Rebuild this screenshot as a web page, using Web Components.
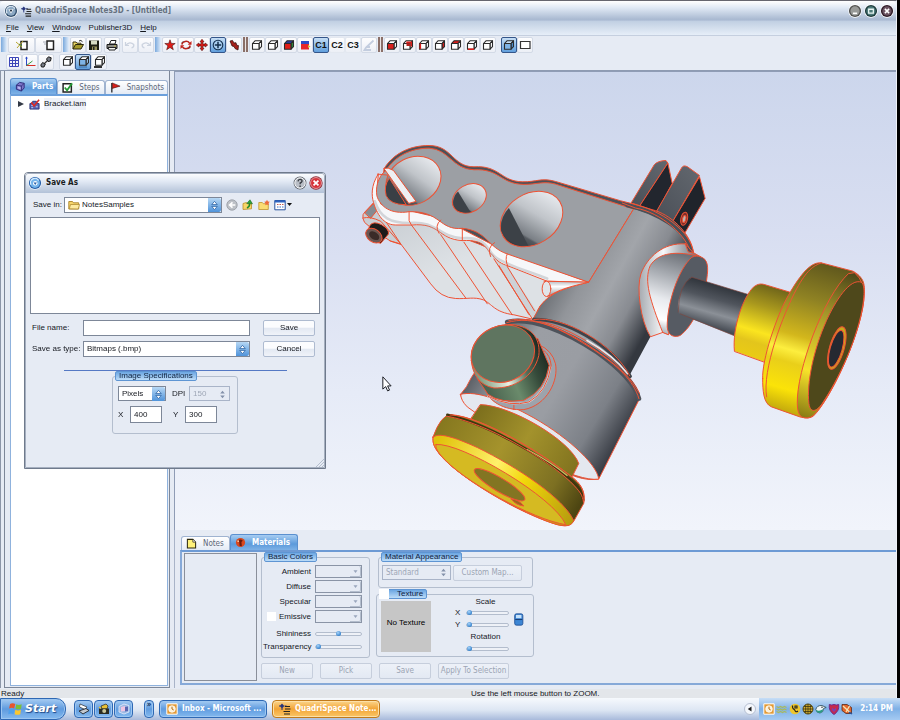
<!DOCTYPE html>
<html lang="en">
<head>
<meta charset="utf-8">
<title>QuadriSpace Notes3D - [Untitled]</title>
<style>
  html, body { margin: 0; height: 100%; overflow: hidden; }
  body {
    --ui: "Liberation Sans", sans-serif;
    --caption: "DejaVu Sans Condensed", "DejaVu Sans", sans-serif;
    --face: #e6ebf4;
    --edge: #a9b4c8;
    --steel: #7d8798;
    font: 8px/12px var(--ui);
    color: #15181f;
    background: #000;
  }
</style>
</head>
<body>
<notes-app></notes-app>
<script>
const BASE = `
  *, *::before, *::after { box-sizing: border-box; }
  :host { display: block; box-sizing: border-box; }
  :host([hidden]) { display: none; }
  button, input, select { font: inherit; color: inherit; margin: 0; padding: 0; border: 0; border-radius: 0; outline: 0; appearance: none; background: none; min-width: 0; }
  label { white-space: nowrap; }
  svg { display: block; }
`;
function define(name, css, html, setup) {
  const tpl = document.createElement('template');
  tpl.innerHTML = `<style>${BASE}${css}</style>`;
  customElements.define(name, class extends HTMLElement {
    constructor() {
      super();
      const root = this.attachShadow({ mode: 'open' });
      root.append(tpl.content.cloneNode(true));
    }
    connectedCallback() {
      if (this.ready) return;
      this.ready = true;
      const body = document.createElement('template');
      body.innerHTML = typeof html === 'function' ? html(this) : html;
      this.shadowRoot.append(body.content.cloneNode(true));
      if (setup) setup(this, this.shadowRoot);
    }
  });
}

/* ---------- icons, each on a 12 x 12 grid ---------- */
const cube = (front = '#fff', top = '#fff', side = '#fff', extra = '') =>
  `<g stroke="#2b2b2b" stroke-width="1.1" stroke-linejoin="round"><path fill="${top}" d="M1.500 4.500l2.500-2.700h6.500l-2.500 2.700z"/><path fill="${side}" d="M8 4.500l2.500-2.700v5.900L8 10.200z"/><path fill="${front}" d="M1.500 4.500H8v5.700H1.500z"/></g>${extra}`;
const ICONS = {
  orb: `<circle cx="6" cy="6" r="5.700" fill="#fff"/><circle cx="6" cy="6" r="5.200" fill="#34506f"/><circle cx="6" cy="6" r="4" fill="#8da9c4"/><path d="M2.600 8a3.900 3.900 0 0 1 6.800-4" fill="none" stroke="#dbe8f3" stroke-width="1"/><path d="M3.800 4.500h4.400L6 8.200z" fill="#fff"/><path d="M4.800 5h2.400L6 7z" fill="#16283c"/>`,
  orbBlue: `<circle cx="6" cy="6" r="5.700" fill="#e8f1fb"/><circle cx="6" cy="6" r="5.200" fill="#245da8"/><circle cx="6" cy="6" r="4.200" fill="#73b3ea"/><path d="M2.600 7.500a3.700 3.700 0 0 1 6.500-3.600" fill="none" stroke="#d7edff" stroke-width="1.100"/><circle cx="6.200" cy="6.200" r="1.900" fill="#fff"/><path d="M4.800 5.500h2.800L6.200 7.800z" fill="#245da8"/>`,
  app: `<path d="M3 .5L5.300 3 3 5.500.7 3z" fill="#27357c"/><path d="M5.500 3h2M1 3H0M3 5v2" stroke="#27357c"/><path d="M6 3.500h5M6 6h5.500M4.500 8.500H11M5 11h6" stroke="#222" stroke-width="1.200"/>`,
  newView: `<path d="M5 2.500h6v8H5z" fill="#fff" stroke="#222" stroke-width="1.500"/><path d="M0 3l6 5M1 9l6-7" stroke="#b9a52c" stroke-width="1"/><path d="M3 5l3 2" stroke="#4b8a37"/>`,
  copyView: `<path d="M4 2h6.500v8.500H4z" fill="#fff" stroke="#222" stroke-width="1.500"/><path d="M0 3h3M1 5h2" stroke="#a7adb8"/>`,
  open: `<path d="M1 10V3h3l1 1.200h4V6" fill="#e9d564" stroke="#3a3510" stroke-width="1"/><path d="M1 10l2.500-4.500h8L9 10z" fill="#a59a2c" stroke="#2a270d" stroke-width="1"/><path d="M7 2q2-1.500 3.500.8" fill="none" stroke="#222"/>`,
  save: `<path d="M1 1.500h10v9.500H1z" fill="#1c1d12"/><path d="M3 1.500h6v4H3z" fill="#d7dcc4"/><path d="M4 7.500h5v3.500H4z" fill="#97935a"/><path d="M5 8h1.500v3H5z" fill="#222"/>`,
  print: `<path d="M3.500 5L5 1.500h5L9 5z" fill="#fff" stroke="#222"/><path d="M1 5.500h10v4H1z" fill="#8b8b86" stroke="#1b1b1b"/><path d="M2 8.500h8l-1 2.500H3z" fill="#f3f3ef" stroke="#222"/><circle cx="9" cy="7" r=".7" fill="#d8c334"/>`,
  undo: `<path d="M1.500 3v3.500H5M1.800 6.300q4-4.500 8-.8.500 2.500-2.300 3.500" fill="none" stroke="#ccd3df" stroke-width="1.200"/>`,
  redo: `<path d="M10.500 3v3.500H7M10.200 6.300q-4-4.500-8-.8-.5 2.500 2.300 3.500" fill="none" stroke="#ccd3df" stroke-width="1.200"/>`,
  star: `<path d="M6 .8l1.300 3.600 3.900.1-3.100 2.300 1.200 3.900L6 8.500l-3.300 2.200 1.200-3.900L.8 4.500l3.900-.1z" fill="#e01d18" stroke="#4a0c0a" stroke-width=".6"/>`,
  rotate: `<path d="M1.800 5.500C2.500 2 7.500 1.300 9.500 4M10.200 6.500C9.500 10 4.500 10.700 2.500 8" fill="none" stroke="#b9241e" stroke-width="1.500"/><path d="M11.500 2v3.800H7.700zM.5 10V6.200h3.800z" fill="#c3211b"/><path d="M2 3.500l1-1M9 9.500l1-1" stroke="#222"/>`,
  move: `<path d="M6 .3l2 2.500H6.900v2.300h2.300V4l2.500 2-2.500 2V6.900H6.900v2.300H8L6 11.700 4 9.200h1.100V6.900H2.800V8L.3 6l2.500-2v1.100h2.300V2.800H4z" fill="#e01d18" stroke="#4a0c0a" stroke-width=".6"/>`,
  zoom: `<circle cx="6" cy="6" r="4.800" fill="#a9cdef" stroke="#14304f" stroke-width="1.100"/><path d="M6 2.800v6.400M2.800 6h6.400" stroke="#14304f" stroke-width="1.500"/>`,
  brush: `<path d="M2 2l2.500-.6L6 4l2-.3.700 2.500 1.800.4L10 11 7 9.500 6 7.500 4 7 3 4.500z" fill="#a3201b" stroke="#2d0a08" stroke-width=".7"/>`,
  cube: cube(), cubeRGB: cube('#e01d18', '#263b9c', '#2f8f3a'),
  split: `<path d="M2 2h8v3H2z" fill="#2c4ac4"/><path d="M2 5h8v5.500H2z" fill="#e5252a"/><path d="M9 6l2.500 1.500L9 9z" fill="#d8c334"/>`,
  pen: `<path d="M10.500 1.500L3 8.500 1.500 11H8M7 8H3" stroke="#c3cddf" stroke-width="1.800" fill="none"/>`,
  cubeFront: cube('#d81f1b'), cubeBack: cube('#fff', '#fff', '#fff', '<path d="M4.300 2.500h5.700v5H8.500V4.500H4.300z" fill="#d81f1b"/><path d="M4.500 4.500H8V7H4.500z" fill="#b5201c"/>'),
  cubeLeft: cube('#fff', '#fff', '#fff', '<path d="M2.300 4.500v5.500" stroke="#d81f1b" stroke-width="1.600"/>'),
  cubeRight: cube('#fff', '#fff', '#d81f1b'), cubeTop: cube('#fff', '#d81f1b'),
  cubeBottom: cube('#fff', '#fff', '#fff', '<path d="M2 10.200h6" stroke="#d81f1b" stroke-width="1.600"/>'),
  cubeBlue: cube('#7fb4e6', '#c7e0f7', '#4f8fcf'),
  rect: `<path d="M1.500 2.500h9.500v7H1.500z" fill="#fff" stroke="#333" stroke-width="1.200"/>`,
  grid: `<path d="M1.500 1.500h9v9h-9zM4.500 1v10M7.500 1v10M1 4.500h10M1 7.500h10" fill="none" stroke="#3c46b8" stroke-width="1"/>`,
  axes: `<path d="M2.500 10V1" stroke="#2c4ac4"/><path d="M2.500 9.500h9" stroke="#d82d24"/><path d="M2.500 9.500L8.500 5" stroke="#3b9a43"/><path d="M1 2.500L2.500.5 4 2.500z" fill="#2c4ac4"/>`,
  link: `<path d="M3 9L9 3" stroke="#333" stroke-width="1.200"/><path d="M.8 9l1.800-2.500L5.300 8 4 11H1.500zM6.500 3L8.500.8l2.700 1L10.500 5 8 5.500z" fill="#777c86" stroke="#1b1b1b"/>`,
  cubeShadow: `<g transform="translate(1 -1)">${cube()}</g>`,
  cubeGlow: `<g transform="translate(1 -1)">${cube('#7fb4e6', '#fff', '#9cc6ee')}</g><path d="M2 11h8" stroke="#3a6ea5" stroke-width="1"/>`,
  cubeFloor: `<g transform="translate(1 -1)">${cube()}</g><path d="M1 11h8" stroke="#1b1b1b" stroke-width="1.800"/>`,
  parts: `<path d="M1.500 4.500L5 1.500l5 1v5L7 11l-5.500-2z" fill="#7c74c9" stroke="#2d2a77"/><path d="M1.500 4.500L7 5.500l3-3M7 5.500V11" fill="none" stroke="#2d2a77" stroke-width=".9"/><path d="M3 6l3 .5v2.700L3 8.300z" fill="#b9b5ee"/>`,
  steps: `<path d="M1.200 2h9v9h-9z" fill="#fff" stroke="#222" stroke-width="1.600"/><path d="M3 6l2.500 3L11 1.500" fill="none" stroke="#249a34" stroke-width="1.900"/>`,
  flag: `<path d="M2 1v10.500" stroke="#222" stroke-width="1.400"/><path d="M2.500 1l8.500 3.500L2.500 7z" fill="#d8201b" stroke="#3b0a08" stroke-width=".6"/>`,
  bracket: `<path d="M1 5h3V2.500h4V5h3v6H1z" fill="#5c66b5" stroke="#2a3276"/><path d="M2.500 7h2M7.500 8.500h2M2.500 9.500h2" stroke="#cfd5f5"/><path d="M2.500 3.500L5.500 7.500 11 .8" fill="none" stroke="#dc2822" stroke-width="1.700"/>`,
  note: `<path d="M1.500 1.500h6l3 3v6.500h-9z" fill="#fff27a" stroke="#2a270d" stroke-width="1.100"/><path d="M7.500 1.500v3h3" fill="#fff" stroke="#2a270d" stroke-width=".8"/>`,
  material: `<circle cx="6" cy="6" r="5" fill="#d9481d"/><path d="M3.500 3.500q3-1.500 5 .5L7 5.500 7.500 10l-2.500-.5-.3-4z" fill="#6a1a0c"/><circle cx="3.500" cy="4.500" r="1" fill="#ffc79a"/>`,
  back: `<circle cx="6" cy="6" r="5.200" fill="#bdc1c7" stroke="#93989f" stroke-width=".8"/><path d="M9.300 6h-5M6.500 3.300L3.600 6l2.900 2.700" fill="none" stroke="#fff" stroke-width="1.600"/>`,
  up: `<path d="M1 10.500V4.500l3.500-1 1 1.300 4-1v6z" fill="#f8d568" stroke="#b98d27" stroke-width=".8"/><path d="M5 9q3-1.500 2.500-4.500" fill="none" stroke="#1f8b2b" stroke-width="1.600"/><path d="M4.700 4.500L8 .8l2.500 4z" fill="#2ba43a" stroke="#14631e" stroke-width=".5"/>`,
  newFolder: `<path d="M.8 10.500V3.500h3.500l1 1.200h5v5.800z" fill="#fbdc72" stroke="#c0942c" stroke-width=".8"/><path d="M9 .8l.9 1.700 1.900.3-1.300 1.500.2 2L9 5.500l-1.700.8.2-2L6.200 2.800l1.900-.3z" fill="#ef6a3a"/>`,
  folder: `<path d="M.8 10V2.500h3.700l1 1.300h5.200V10z" fill="#f7d56a" stroke="#a8822a" stroke-width=".9"/><path d="M1.300 9.800L2.500 5.500h9L10.300 10z" fill="#fdeaa0" stroke="#a8822a" stroke-width=".7"/>`,
  views: `<path d="M.8 1.500h10.400v9.300H.8z" fill="#fff" stroke="#27529e"/><path d="M.8 2.500h10.400" stroke="#2c62c0" stroke-width="2"/><path d="M3 5.500h1.500M5.500 5.500H7M8 5.500h1.500" stroke="#c45a50"/><path d="M3 8h1.500M5.500 8H7M8 8h1.500" stroke="#3d73c9"/>`,
  windows: `<g transform="skewX(-8) translate(1 0)"><path d="M1 1.800q2-1.300 4.500 0L5 5.500q-2-1-4.300 0z" fill="#e9552c"/><path d="M6.300 2q2.300 1 4.700 0v3.800q-2.300 1-4.700 0z" fill="#7dbf38"/><path d="M.7 6.500q2.300-1 4.500 0v3.900q-2.200-1-4.500 0z" fill="#4ea0ec"/><path d="M6.200 6.700q2.400 1 4.800 0v3.800q-2.400 1-4.800 0z" fill="#fbc72f"/></g>`,
  scanner: `<path d="M2 1l7 3-2 2.500L1.500 4z" fill="#fff" stroke="#3a4048" stroke-width=".8"/><path d="M1 8l7-2.500L11 7.500 5 11z" fill="#c3c9d0" stroke="#20252b" stroke-width=".9"/>`,
  camera: `<path d="M3 3l5-2 2 2-1 3H4z" fill="#e6be35" stroke="#222" stroke-width=".7"/><path d="M1 5.500h10v5.500H1z" fill="#292b22"/><circle cx="6.200" cy="8" r="2" fill="#c8c69c"/><path d="M1 4l2 1.500" stroke="#e6be35" stroke-width="1.500"/>`,
  mediaCard: `<path d="M1 3.500L6 1l5 1.500V9l-5 2-5-2z" fill="#9cb9e4" stroke="#e9eefb" stroke-width=".8"/><path d="M3 4l4-1v5L3 8.500z" fill="#f0c5e2"/><path d="M7 4l3-.5V8l-3 .5z" fill="#5a66b0"/>`,
  clock: `<path d="M.8.8h10.400v10.400H.8z" fill="#e39a35" stroke="#fff" stroke-width="1"/><circle cx="6" cy="6" r="3.300" fill="#fdf0d6" stroke="#fff" stroke-width=".7"/><path d="M6 3.700V6l1.700 1" stroke="#b36a12" stroke-width="1" fill="none"/>`,
  wave: `<path d="M.5 3.500l2 1 2-1 2 1 2-1 2 1M.5 6l2 1 2-1 2 1 2-1 2 1M.5 8.500l2 1 2-1 2 1 2-1 2 1" fill="none" stroke="#a9b95c" stroke-width="1.200"/>`,
  phone: `<circle cx="6" cy="6" r="5.300" fill="#efc62c"/><path d="M3.500 2.500q-.5 3 2 4M5.500 6.500q1 3.500 3.500 1.500M6 3h2v2h-2z" fill="none" stroke="#222" stroke-width="1.100"/>`,
  globe: `<circle cx="6" cy="6" r="5.200" fill="#dcb431"/><path d="M6 1v10M1 6h10M2 3.500h8M2 8.500h8M3.700 2v8M8.300 2v8" stroke="#2a270d" stroke-width=".7"/><circle cx="6" cy="6" r="5" fill="none" stroke="#2a270d" stroke-width=".8"/>`,
  bird: `<path d="M.8 6.500Q2 2 7 2.500l4.200 2-2.500.8Q8.500 9.500 5 10 1.500 10 .8 6.500z" fill="#eef5f7" stroke="#2b4a57" stroke-width=".8"/><path d="M1 6.800Q4 9 8 6.300 8 9.500 5 10 1.500 10 1 6.800z" fill="#2a9c85"/><circle cx="7" cy="4.300" r=".7" fill="#222"/>`,
  shield: `<path d="M1.300 1.500q2.300 1 4.700 0 2.400 1 4.700 0Q11.500 8 6 11.500.5 8 1.300 1.500z" fill="#c62a4c" stroke="#712a89" stroke-width="1"/><path d="M4 4.500l2 2 2-2V7L6 9 4 7z" fill="#7a3fb0"/>`,
  tools: `<path d="M1 1.500h5l4.500 3v6H5L1 7.500z" fill="#e4672c" stroke="#5c2a18" stroke-width=".8"/><path d="M2 3l7 6.500M8.500 3L5 9" stroke="#f5e4b4" stroke-width="1.300"/><path d="M8 9l3 2" stroke="#27529e" stroke-width="1.500"/>`,
  linked: `<rect x="2.500" y=".8" width="7.500" height="10.400" rx="1.500" fill="#3d86d4" stroke="#1f4f94" stroke-width=".8"/><path d="M3.700 1.800h5v3h-5z" fill="#c5e2fb"/><path d="M3 6h6.500" stroke="#163d77" stroke-width="1"/>`,
  spin: `<path d="M6 1.500L9 5H3zM6 10.500L9 7H3z" fill="#fff" stroke="#225a9e" stroke-width=".8"/>`,
  spinGray: `<path d="M6 2L8.500 5h-5zM6 10L8.500 7h-5z" fill="#8391aa"/>`,
  down: `<path d="M3.300 4.300h5.400L6 8z" fill="#9aa6bd"/>`,
  help: `<circle cx="6" cy="6" r="5.500" fill="#5b6068"/><circle cx="6" cy="6" r="4.500" fill="#b9bec6" stroke="#fff" stroke-width=".8"/><path d="M4.300 4.600q.2-1.800 1.900-1.700 1.700.2 1.500 1.600-.2.900-1.500 1.500v1M6.100 8.200v1.200" fill="none" stroke="#3c4046" stroke-width="1.200"/>`,
  closeRed: `<circle cx="6" cy="6" r="5.700" fill="#8e2530"/><circle cx="6" cy="6" r="4.700" fill="#d6343b" stroke="#f7c6c8" stroke-width=".6"/><path d="M3.900 3.900l4.200 4.200M8.100 3.900L3.900 8.100" stroke="#fff" stroke-width="1.500"/>`,
  min: `<circle cx="6" cy="6" r="5.700" fill="#fff"/><circle cx="6" cy="6" r="5.200" fill="#4f504f"/><circle cx="6" cy="6" r="4" fill="#989a98"/><path d="M4.200 8h3.600" stroke="#fff" stroke-width="1.400"/>`,
  max: `<circle cx="6" cy="6" r="5.700" fill="#fff"/><circle cx="6" cy="6" r="5.200" fill="#1d3a3c"/><circle cx="6" cy="6" r="4" fill="#4d7a78"/><path d="M4 4.500h4v3.300H4z" fill="none" stroke="#e8f4f2" stroke-width="1.100"/>`,
  close: `<circle cx="6" cy="6" r="5.700" fill="#fff"/><circle cx="6" cy="6" r="5.200" fill="#2d1a26"/><circle cx="6" cy="6" r="4" fill="#6b5361"/><path d="M4.200 4.200l3.600 3.600M7.800 4.200L4.200 7.800" stroke="#fff" stroke-width="1.300"/>`,
  collapse: `<circle cx="6" cy="6" r="5.500" fill="#f4f7fc" stroke="#a9b4c8" stroke-width=".8"/><path d="M7.500 3.500v5L3.800 6z" fill="#1b1b1b"/>`
};
define('ui-icon', `:host { display: inline-block; flex: none; width: var(--size, 12px); height: var(--size, 12px); } svg { width: 100%; height: 100%; }`,
  el => `<svg viewBox="0 0 12 12" aria-hidden="true">${ICONS[el.getAttribute('name')] || ''}</svg>`);

/* ---------- small controls ---------- */
define('tool-button', `
  :host { flex: none; }
  button { display: flex; align-items: center; justify-content: center; width: 16px; height: 16px; border: 1px solid #d3dae6; border-radius: 2px; background: linear-gradient(#fdfdfe, #eceff6); font: bold 9px/12px "Liberation Sans", sans-serif; color: #101114; }
  :host([wide]) button { width: 27px; }
  :host([active]) button { background: linear-gradient(#c6def5, #5f9edc); border-color: #34568a; }
  ui-icon { --size: 12px; }
  :host([text]) button { border-color: #e3e8f0; }
  :host([text][active]) button { border-color: #34568a; }
`, el => {
  const t = el.getAttribute('text'), pressed = el.hasAttribute('active');
  return `<button type="button" aria-pressed="${pressed}" aria-label="${el.getAttribute('label') || t}">${t || `<ui-icon name="${el.getAttribute('icon')}"></ui-icon>`}</button>`;
});
define('tool-grip', `
  :host { flex: none; width: 6px; height: 15px; margin: 0 1px; background: linear-gradient(90deg, #7aa9dd, #e4eefa); }
  :host([brown]) { width: 5px; background: linear-gradient(90deg, #8a6f68 40%, #e9e4e4 40% 60%, #8a6f68 60%); }
`, '');

define('push-button', `
  button { width: 100%; height: 16px; border: 1px solid #aebbd0; border-radius: 2px; background: linear-gradient(#fbfcfe 45%, #e2e8f2 50%, #f0f3f9); text-align: center; white-space: nowrap; }
  button:disabled { border-color: #c6cedc; background: linear-gradient(#edf1f8, #e3e9f3); color: #9ba4b4; font: 8px/12px var(--caption); }
`, el => `<button type="button" ${el.hasAttribute('disabled') ? 'disabled' : ''}>${el.getAttribute('label')}</button>`);

const SELECT_CSS = `
  .pick { display: grid; grid-template-columns: 1fr 13px; border: 1px solid var(--steel); background: #fff; height: 16px; }
  .pick select { grid-area: 1 / 1 / 2 / 3; width: 100%; height: 100%; padding: 0 14px 0 3px; line-height: 14px; }
  .pick .knob { grid-area: 1 / 2; display: flex; align-items: center; justify-content: center; pointer-events: none; background: linear-gradient(#b7d8f5, #4f93da); border-radius: 0 2px 2px 0; }
  .pick .knob ui-icon { --size: 11px; }
  .pick.off { background: var(--face); border-color: #a9b4c8; color: #808a9c; }
  .pick.off .knob { background: none; }
`;
define('group-box', `
  fieldset { margin: 0; padding: 0; border: 1px solid #b4bece; border-radius: 3px; min-width: 0; height: 100%; }
  legend { display: flex; align-items: center; margin-left: 2px; padding: 0 3px; height: 10px; line-height: 10px; white-space: nowrap; color: #10233f; border-radius: 2px; border: 1px solid #5e95d3; background: linear-gradient(#6ba6e2, #bcdcf8); }
  legend label { display: flex; align-items: center; gap: 8px; margin-left: -4px; }
  legend input { width: 10px; height: 10px; background: #fff; }
`, el => {
  const t = el.getAttribute('title-text');
  return `<fieldset><legend>${el.hasAttribute('check') ? `<label><input type="checkbox">${t}</label>` : t}</legend><slot></slot></fieldset>`;
});
const SLIDER_CSS = `
  input[type=range] { display: block; width: 100%; height: 6px; cursor: default; }
  input[type=range]::-webkit-slider-runnable-track { height: 4px; border: 1px solid #b3bdcd; border-radius: 2px; background: #eef1f7; }
  input[type=range]::-webkit-slider-thumb { appearance: none; width: 5px; height: 5px; margin-top: -2px; border-radius: 50%; background: radial-gradient(circle at 40% 35%, #a9d5fa, #2f7ecb 75%); }
`;
const TAB_CSS = `
  [role=tablist] { display: flex; align-items: flex-end; }
  [role=tab] { display: flex; align-items: center; gap: 6px; height: 14px; padding: 0 4px; border: 1px solid #9fb3d0; border-bottom: 0; border-radius: 3px 3px 0 0; background: linear-gradient(#fff, #e4ebf5); font: 8px/12px var(--caption); color: #5d6878; }
  [role=tab][aria-selected=true] { height: 16px; background: linear-gradient(#a7cdf2, #5c9adb 60%, #7db1e6); border-color: #5b90cf; color: #fff; font-weight: bold; }
  [role=tab] ui-icon { --size: 11px; }
`;

/* ---------- window chrome ---------- */
define('app-titlebar', `
  :host { display: flex; align-items: center; height: 20px; padding: 0 2px 0 4px; gap: 3px; border-radius: 4px 4px 0 0; background: linear-gradient(#fff, #dfe8f4 35%, #a9b9d1 92%, #b7c6dc); }
  h1 { flex: 1; margin: 0; font: bold 8px/12px var(--caption); color: #667180; white-space: nowrap; }
  .lead { --size: 14px; } .mark { --size: 11px; }
  nav { display: flex; gap: 2px; } button { display: flex; } nav ui-icon { --size: 14px; }
`, `<ui-icon class="lead" name="orb"></ui-icon><ui-icon class="mark" name="app"></ui-icon><h1>QuadriSpace Notes3D - [Untitled]</h1>
<nav aria-label="Window"><button type="button" aria-label="Minimize"><ui-icon name="min"></ui-icon></button><button type="button" aria-label="Restore"><ui-icon name="max"></ui-icon></button><button type="button" aria-label="Close"><ui-icon name="close"></ui-icon></button></nav>`);
define('app-menubar', `
  :host { display: flex; gap: 8px; height: 15px; padding: 1px 6px; background: linear-gradient(#c0cfe2, #e6eef8); border-bottom: 1px solid #c5cfdf; }
  button { line-height: 12px; }
`, `<button type="button"><u>F</u>ile</button><button type="button"><u>V</u>iew</button><button type="button"><u>W</u>indow</button><button type="button">Publisher3D</button><button type="button"><u>H</u>elp</button>`);
const tb = (icon, label, a = '') => `<tool-button icon="${icon}" label="${label}" ${a}></tool-button>`;
define('app-toolbars', `
  :host { background: var(--face); border-bottom: 1px solid #8e9bb2; height: 35px; }
  div { display: flex; align-items: center; height: 17px; }
  div + div { padding-left: 6px; }
  .gap { margin-left: 2px; }
  .wide-gap { margin-left: 5px; }
`, `<div role="toolbar" aria-label="Main"><tool-grip></tool-grip>${tb('newView', 'New view', 'wide')}${tb('copyView', 'Copy view', 'wide')}
<tool-grip></tool-grip>${tb('open', 'Open')}${tb('save', 'Save')}${tb('print', 'Print', 'class="gap"')}${tb('undo', 'Undo', 'class="gap"')}${tb('redo', 'Redo')}
<tool-grip></tool-grip>${tb('star', 'Reset')}${tb('rotate', 'Rotate')}${tb('move', 'Pan')}${tb('zoom', 'Zoom', 'active')}${tb('brush', 'Fly')}
<tool-grip brown></tool-grip>${tb('cube', 'Wireframe')}${tb('cube', 'Hidden line')}${tb('cubeRGB', 'Shaded')}${tb('split', 'Split')}
<tool-button text="C1" active></tool-button><tool-button text="C2"></tool-button><tool-button text="C3"></tool-button>${tb('pen', 'Pen')}
<tool-grip brown></tool-grip>${tb('cubeFront', 'Front')}${tb('cubeBack', 'Back')}${tb('cubeLeft', 'Left')}${tb('cubeRight', 'Right')}${tb('cubeTop', 'Top')}${tb('cubeBottom', 'Bottom')}${tb('cube', 'Isometric')}${tb('cubeBlue', 'Perspective', 'active class="wide-gap"')}${tb('rect', 'Orthographic')}</div>
<div role="toolbar" aria-label="Display">${tb('grid', 'Grid')}${tb('axes', 'Axes')}${tb('link', 'Links')}${tb('cubeShadow', 'No shadow', 'class="wide-gap"')}${tb('cubeGlow', 'Glow', 'active')}${tb('cubeFloor', 'Floor')}</div>`);

/* ---------- parts tree ---------- */
define('parts-panel', TAB_CSS + `
  :host { display: flex; flex-direction: column; padding: 7px 1px 1px 5px; border: 1px solid var(--steel); border-top: 0; background: var(--face); min-height: 0; }
  .tree { flex: 1; background: #fff; border: 1px solid #8fb2dd; border-top: 2px solid #6b9fdb; padding: 2px 6px; margin: 0; list-style: none; }
  li { display: flex; align-items: center; gap: 4px; }
  li ui-icon { --size: 11px; }
  li span { background: #eef1f8; }
  [role=tab] { flex: 1 1 46px; } [role=tab]:last-child { flex-basis: 62px; }
`, `<div role="tablist"><button role="tab" aria-selected="true"><ui-icon name="parts"></ui-icon>Parts</button><button role="tab" aria-selected="false"><ui-icon name="steps"></ui-icon>Steps</button><button role="tab" aria-selected="false"><ui-icon name="flag"></ui-icon>Snapshots</button></div>
<ul class="tree" role="tree"><li role="treeitem"><svg width="8" height="8" viewBox="0 0 8 8" aria-hidden="true"><path d="M1 1l6 3-6 3z" fill="#333a46"/></svg><ui-icon name="bracket"></ui-icon><span>Bracket.iam</span></li></ul>`);

/* ---------- 3D model ---------- */
define('model-view', `
  :host { min-height: 0; border-top: 1px solid #8f9cb5; border-left: 1px solid #8f9cb5; background: linear-gradient(#ccd6ec, #d8def1 35%, #e6ebf7 70%, #f1f4fb); overflow: hidden; }
  svg { width: 100%; height: 100%; }
`, `<svg viewBox="174 71 722 459" role="img" aria-label="Bracket assembly">
<defs>
  <linearGradient id="neck" gradientUnits="userSpaceOnUse" x1="610" y1="500" x2="890" y2="655"><stop offset="0" stop-color="#6d7176"/><stop offset=".25" stop-color="#92959a"/><stop offset=".5" stop-color="#a2a5aa"/><stop offset=".75" stop-color="#888b91"/><stop offset="1" stop-color="#34383f"/></linearGradient>
  <linearGradient id="drum" gradientUnits="userSpaceOnUse" x1="250" y1="200" x2="665" y2="450"><stop offset="0" stop-color="#5d6167"/><stop offset=".2" stop-color="#9b9ea4"/><stop offset=".5" stop-color="#9a9da3"/><stop offset=".8" stop-color="#7c8087"/><stop offset="1" stop-color="#363a42"/></linearGradient>
  <linearGradient id="bore" x1="0" y1=".7" x2="1" y2=".3"><stop offset="0" stop-color="#2e3238"/><stop offset=".22" stop-color="#555a60"/><stop offset=".25" stop-color="#7a7f85"/><stop offset=".6" stop-color="#c0c4c9"/><stop offset="1" stop-color="#e9ecf0"/></linearGradient>
  <linearGradient id="side" x1="0" y1="0" x2="1" y2="1"><stop offset="0" stop-color="#c9ced3"/><stop offset=".4" stop-color="#dde1e5"/><stop offset="1" stop-color="#dde1e5"/></linearGradient>
  <linearGradient id="horn" x1="0" y1="0" x2="0" y2="1"><stop offset="0" stop-color="#b6bac0"/><stop offset=".35" stop-color="#fff"/><stop offset="1" stop-color="#8f949a"/></linearGradient>
  <linearGradient id="boss" x1=".6" y1="0" x2=".4" y2="1"><stop offset="0" stop-color="#6d7178"/><stop offset=".3" stop-color="#a9adb3"/><stop offset=".6" stop-color="#e8eaee"/><stop offset=".85" stop-color="#fff"/><stop offset="1" stop-color="#aeb3ba"/></linearGradient>
  <linearGradient id="bossL" x1="0" y1="0" x2="1" y2="0"><stop offset="0" stop-color="#a6aab0"/><stop offset=".4" stop-color="#f7f8fa"/><stop offset=".7" stop-color="#a7abb1"/><stop offset="1" stop-color="#676c73"/></linearGradient>
  <linearGradient id="shaft" gradientUnits="userSpaceOnUse" x1="350" y1="460" x2="315" y2="585"><stop offset="0" stop-color="#2f343b"/><stop offset=".35" stop-color="#50555d"/><stop offset=".68" stop-color="#8b9097"/><stop offset="1" stop-color="#474c54"/></linearGradient>
  <linearGradient id="hub" gradientUnits="userSpaceOnUse" x1="520" y1="465" x2="455" y2="680"><stop offset="0" stop-color="#6c621a"/><stop offset=".3" stop-color="#a8971d"/><stop offset=".65" stop-color="#fbe51f"/><stop offset=".8" stop-color="#e3c51c"/><stop offset="1" stop-color="#eacb14"/></linearGradient>
  <linearGradient id="rim" gradientUnits="userSpaceOnUse" x1="690" y1="400" x2="560" y2="850"><stop offset="0" stop-color="#5f571d"/><stop offset=".25" stop-color="#8f8223"/><stop offset=".5" stop-color="#d3b71c"/><stop offset=".6" stop-color="#fdee3e"/><stop offset=".68" stop-color="#e9cf1a"/><stop offset=".85" stop-color="#fbe308"/><stop offset="1" stop-color="#c0a60d"/></linearGradient>
  <linearGradient id="rimEdge" gradientUnits="userSpaceOnUse" x1="760" y1="430" x2="610" y2="860"><stop offset="0" stop-color="#4d4719"/><stop offset=".3" stop-color="#a3952a"/><stop offset=".7" stop-color="#f7e22a"/><stop offset="1" stop-color="#8a7c14"/></linearGradient>
  <linearGradient id="wheel" gradientUnits="userSpaceOnUse" x1="120" y1="400" x2="540" y2="640"><stop offset="0" stop-color="#86781f"/><stop offset=".4" stop-color="#a5932c"/><stop offset=".8" stop-color="#7d7022"/><stop offset="1" stop-color="#4d4512"/></linearGradient>
  <linearGradient id="wheelEdge" gradientUnits="userSpaceOnUse" x1="110" y1="450" x2="520" y2="690"><stop offset="0" stop-color="#e0c20a"/><stop offset=".4" stop-color="#fff06a"/><stop offset=".6" stop-color="#f2d70a"/><stop offset="1" stop-color="#b59b0e"/></linearGradient>
  <linearGradient id="hub2" gradientUnits="userSpaceOnUse" x1="220" y1="360" x2="530" y2="540"><stop offset="0" stop-color="#7a6d1c"/><stop offset=".5" stop-color="#a3922c"/><stop offset="1" stop-color="#80721e"/></linearGradient>
  <linearGradient id="green" gradientUnits="userSpaceOnUse" x1="260" y1="290" x2="445" y2="210"><stop offset="0" stop-color="#4b6450"/><stop offset=".4" stop-color="#6a8a6b"/><stop offset=".75" stop-color="#354a3a"/><stop offset="1" stop-color="#1e2b22"/></linearGradient>
  <linearGradient id="greenEdge" gradientUnits="userSpaceOnUse" x1="220" y1="230" x2="410" y2="160"><stop offset="0" stop-color="#7d997c"/><stop offset=".4" stop-color="#e9f1e4"/><stop offset=".7" stop-color="#55705a"/><stop offset="1" stop-color="#1f2d24"/></linearGradient>
  <linearGradient id="prong" x1="0" y1="1" x2="1" y2="0"><stop offset="0" stop-color="#4a4f57"/><stop offset="1" stop-color="#63686f"/></linearGradient>
</defs>
<g stroke="#ee5234" stroke-width="3" stroke-linejoin="round" stroke-linecap="round">
 <g transform="translate(600 130) scale(.33333)">
  <path d="M93 216L162 102Q172 90 197 89L203 97 118 226z" fill="url(#prong)"/>
  <path d="M118 226L203 97 216 158 170 243z" fill="#22262e"/>
  <path d="M170 240L245 110Q250 102 262 108L298 134 216 275z" fill="url(#prong)"/>
  <path d="M216 275L298 138 315 203 254 307z" fill="#20242b"/>
  <ellipse cx="252" cy="264" rx="10" ry="20" transform="rotate(12 252 264)" fill="#7b2f2a"/><ellipse cx="252" cy="265" rx="5" ry="11" transform="rotate(12 252 265)" fill="#b9b5b5"/>
 </g>
 <g transform="translate(340 130) scale(.33333)">
  <!-- rounded clamp lug with its screw -->
  <path d="M66 262Q64 250 72 244L98 216 150 262 182 342 150 332 100 300 72 276z" fill="#c9ced3"/>
  <path d="M72 246L98 218 108 240 90 262z" fill="#868b91"/>
  <!-- ribbed side wall -->
  <path d="M128 262L180 340 270 460Q300 502 345 504C380 506 400 498 428 508 455 520 460 545 520 553L576 566 600 525 635 492 745 455 500 380 260 265z" fill="url(#side)"/>
  <path d="M460 385L500 408 590 545 576 566z" fill="#cdd2d7" stroke="none"/>
  <path d="M212 283L375 502M300 312L440 520M370 335L515 553M460 385L576 566M500 408L582 541M475 405L565 552" fill="none"/>
  <!-- upper silhouette -->
  <path d="M130 113C160 65 210 44 265 44 335 44 335 108 400 108 478 103 480 152 545 153 590 154 600 140 645 152L840 210 880 220 946 240C1000 258 1055 315 1060 367L1040 385 745 455 500 372 120 230z" fill="#4c5158"/>
  <!-- rolled edge -->
  <path d="M112 130C90 165 92 195 98 215 112 262 135 283 165 283L212 283C300 275 290 325 365 330 440 325 435 360 455 372 470 398 500 405 500 405L620 452 745 455 500 365 300 262 120 220 110 160z" fill="#f6f7f9"/>
  <path d="M102 212C118 262 150 276 205 277 292 270 288 317 365 323 440 318 438 358 462 378 490 402 560 420 620 444" fill="none" stroke="#a6abb1" stroke-width="8" opacity=".45"/>
  <!-- top face -->
  <path d="M136 118C165 72 215 52 265 52 325 55 335 115 400 117 478 113 480 160 550 161 590 161 610 150 645 160L880 235 745 455 500 370C440 350 440 300 365 293 295 300 300 240 205 243 150 252 118 228 108 195 104 165 112 150 122 132z" fill="#9c9fa4"/>
  <!-- bores -->
  <ellipse cx="218" cy="150" rx="86" ry="70" transform="rotate(-28 218 150)" fill="url(#bore)"/>
  <path d="M145 143Q128 165 136 195 148 222 195 222z" fill="#3a3f45"/>
  <path d="M130 113L142 112 158 119 226 212 204 218 140 128z" fill="#eef0f3"/><path d="M110 130L140 133" fill="none"/>
  <ellipse cx="386" cy="203" rx="54" ry="41" transform="rotate(-30 386 203)" fill="url(#bore)"/>
  <path d="M352 182L390 245Q345 250 338 215 338 195 352 182z" fill="#3c4147" stroke="none"/>
  <ellipse cx="573" cy="265" rx="100" ry="76" transform="rotate(-32 573 265)" fill="url(#bore)"/>
  <path d="M505 232L563 345Q500 345 482 300 478 260 505 232z" fill="#3c4147" stroke="none"/>
  <path d="M205 243L205 270 212 283M300 268Q280 285 295 308M365 293L365 330M462 336Q438 350 450 378M500 370Q492 385 502 408" fill="none"/>
  <!-- neck cylinder -->
  <path d="M880 235C945 250 1040 300 1060 370L930 620 868 735 780 700 640 590 576 566 600 525C630 485 680 470 745 455z" fill="url(#neck)" stroke="none"/>
  <path d="M880 235L745 455M745 455C680 470 630 485 600 525L578 566" fill="none"/>
  <path d="M612 452L745 455C690 468 660 475 622 498z" fill="url(#horn)"/><ellipse cx="618" cy="475" rx="13" ry="23" fill="#e2e5e9"/>
  <path d="M860 225C950 245 1040 300 1056 365" fill="none" stroke="#4b5057" stroke-width="9"/><path d="M846 217L886 232C960 245 1045 315 1052 372M875 218C965 240 1052 300 1060 367" fill="none"/>
  <!-- clamp screw -->
  <path d="M88 283Q98 270 122 282 145 295 143 310L120 338Q90 335 78 308z" fill="#1d1b1a"/><ellipse cx="99" cy="315" rx="27" ry="19" transform="rotate(35 99 315)" fill="#6a5651"/><ellipse cx="100" cy="315" rx="17" ry="11" transform="rotate(35 100 315)" fill="#3a2b28" stroke="none"/>
  <path d="M66 262Q88 256 120 272L180 340 146 330" fill="none"/>
 </g>
 <g transform="translate(600 130) scale(.33333)">
  <path d="M150 618C120 570 108 470 122 430 140 380 190 335 255 340L278 365 300 378 205 612 190 606z" fill="url(#bossL)"/>
  <path d="M187 605C150 510 130 450 150 405 175 365 230 360 300 378L240 480 205 612z" fill="url(#boss)"/>
  <path d="M255 338L280 368 265 364z" fill="#4c5158"/>
  <path d="M300 378C325 385 325 410 320 445 310 520 275 590 240 615 225 622 203 618 201 590 200 520 235 415 275 380 285 375 295 376 300 378z" fill="#565b63"/>
  <path d="M275 440L445 492 403 616 236 550C225 520 245 455 275 440z" fill="url(#shaft)" stroke="none"/>
  <path d="M275 440L445 492M240 550L403 616M275 440Q235 460 234 545" fill="none" stroke="#7e453e" stroke-width="2"/>
  <path d="M403 662C396 590 430 500 460 470 475 458 485 459 500 464L600 494 495 695z" fill="url(#hub)"/>
  <path d="M488 745C485 690 530 555 565 495 605 425 635 393 665 397L760 422C800 445 795 470 792 510 780 620 690 810 640 858 625 866 615 863 600 860L515 830C490 820 488 780 488 745z" fill="url(#rim)"/>
  <path d="M745 430C670 500 590 720 592 820Q592 850 605 860 625 868 640 856C690 810 780 620 792 510Q798 455 765 427z" fill="url(#rimEdge)"/>
  <path d="M785 455C750 440 705 515 680 570 640 660 620 760 627 820 632 855 655 840 670 815 730 725 785 590 792 500 794 480 793 462 785 455z" fill="#4e481b"/>
  <path d="M500 800C485 720 550 550 590 475 620 420 640 405 665 397" fill="none"/>
  <ellipse cx="711" cy="653" rx="22" ry="66" transform="rotate(16 711 653)" fill="#c9a91c"/><ellipse cx="709" cy="655" rx="18" ry="57" transform="rotate(16 709 655)" fill="#252931"/>
 </g>
 <g transform="translate(400 290) scale(.33333)">
  <!-- lower drum -->
  <path d="M180 312Q200 290 212 262L320 95C400 70 500 112 590 172 660 225 722 290 718 325L595 567C560 572 530 562 500 550L190 335z" fill="url(#drum)"/>
  <path d="M180 312C230 300 300 330 380 372 490 430 590 520 595 567 560 572 500 550 440 520L200 350Q180 330 180 312z" fill="#e4e8ef"/>
  <path d="M320 95C390 78 500 125 590 185 660 235 705 285 716 325" fill="none" stroke="#4e535b" stroke-width="14"/>
  <path d="M400 87C490 85 630 160 690 258" fill="none" stroke="#3f444b" stroke-width="10"/>
  <path d="M560 150Q640 195 682 250" fill="none" stroke="#e7eaee" stroke-width="5"/>
  <path d="M318 97C400 70 490 120 580 178 650 225 700 270 716 325M400 87C490 75 640 160 688 256M325 90C400 70 520 130 600 190 660 232 690 262 718 310" fill="none"/>
  <!-- knob seat -->
  <path d="M256 295C258 330 310 362 370 358 440 345 475 270 465 220Q455 180 415 163L440 230 330 335z" fill="#9da3ac"/>
  <path d="M262 318Q330 350 385 335 440 300 450 230" fill="none" stroke="#d7dbe1" stroke-width="5"/>
  <path d="M262 318Q330 352 385 335 440 305 452 225 450 195 430 180M340 345V358" fill="none"/>
  <!-- green knob -->
  <path d="M230 265L262 312Q300 340 370 330 435 300 446 225L412 145z" fill="url(#green)"/>
  <path d="M212 210C205 150 260 100 335 102 400 110 420 150 415 195 400 260 340 295 280 293 235 285 215 250 212 210z" fill="url(#greenEdge)"/>
  <ellipse cx="307" cy="190" rx="97" ry="84" transform="rotate(-24 307 190)" fill="#5f7560"/>
  <!-- lower hand wheel -->
  <path d="M240 343C330 345 510 450 535 520L510 570 370 520 212 385z" fill="url(#hub2)"/>
  <path d="M97 440Q120 375 150 373C250 380 440 500 520 565 550 590 555 615 550 640L522 690Q510 712 480 706C370 680 150 550 108 480 98 465 96 455 97 440z" fill="url(#wheel)"/>
  <path d="M140 374C260 400 430 500 515 572Q545 600 548 630" fill="none" stroke="#3e370f" stroke-width="8"/><path d="M380 478Q450 515 500 556" fill="none" stroke="#cdbb63" stroke-width="4"/>
  <path d="M148 374C250 378 440 500 520 565 550 590 552 615 550 635M140 378C260 400 430 500 510 575 540 605 546 615 549 635" fill="none"/>
  <path d="M97 442C110 425 160 440 230 472 350 530 490 625 520 692 512 712 490 708 470 704 370 675 150 550 108 480 98 465 96 455 97 442z" fill="url(#wheelEdge)"/>
  <path d="M106 463C180 455 460 620 496 704 400 690 180 570 120 495 108 480 104 470 106 463z" fill="#d5ba22"/>
  <ellipse cx="297" cy="584" rx="88" ry="20" transform="rotate(31 297 584)" fill="#837522"/>
  <path d="M332 627Q355 628 370 648 345 645 332 627z" fill="#9a6a1f"/>
 </g>
</g>
<path d="M382 376.500v12.300l2.900-2.500 1.900 4.300 1.900-.8-1.900-4.200h3.500z" fill="#fff" stroke="#1c1f26" stroke-width="1"/>
</svg>`);

/* ---------- materials ---------- */
define('materials-panel', TAB_CSS + SELECT_CSS + SLIDER_CSS + `
  :host { padding: 4px 0 3px 5px; background: var(--face); border-left: 1px solid var(--edge); }
  [role=tablist] { padding-left: 1px; }
  [role=tab] { width: 49px; } [role=tab][aria-selected=true] { width: 68px; }
  .pane { display: flex; gap: 4px; padding: 0 2px 2px; height: 135px; border: 2px solid #86a9d8; border-right: 0; border-top-color: #6d9ad4; }
  .list { flex: none; width: 73px; margin-top: 1px; border: 1px solid #8a8f9a; }
  .work { flex: 1; display: grid; grid-template-columns: 109px 158px; grid-template-rows: 106px 16px; gap: 5px 6px; align-content: start; }
  .colors { padding: 3px 6px 0 1px; display: grid; grid-template-columns: 48px 47px; column-gap: 4px; row-gap: 2px; align-items: center; }
  .colors > label { text-align: right; line-height: 13px; }
  .colors .pick { height: 13px; border-color: #8a94a6; grid-template-columns: 1fr 11px; grid-template-rows: 11px; }
  .colors .knob { border: 1px solid #b3bdcd; border-width: 0 1px 1px 0; }
  .colors .knob ui-icon { --size: 9px; }
  .colors .check { display: flex; justify-content: space-between; margin-left: 4px; } .check input { width: 9px; height: 9px; margin: 2px 0; background: #fff; }
  .colors .slider { line-height: 11px; } .colors .first { margin-top: 3px; }
  .right { display: flex; flex-direction: column; gap: 1px; }
  .right group-box:first-child { margin: 0 1px 0 2px; }
  .looks { display: grid; grid-template-columns: 69px 69px; gap: 2px; padding: 3px 4px 6px 3px; }
  .looks .pick { height: 15px; }
  .looks select { font: 8px/12px var(--caption); }
  .texture { display: flex; padding: 2px 5px 4px 4px; }
  .swatch { display: flex; align-items: center; justify-content: center; width: 50px; height: 51px; background: #c6c6c6; color: #000; white-space: nowrap; padding-bottom: 8px; }
  .scale { display: grid; grid-template-columns: 8px 43px 14px; column-gap: 3px; margin: -4px 0 -4px 24px; align-items: center; grid-template-rows: 10px 11px 13px 12px 12px; line-height: 10px; }
  .scale label { grid-column: 1; } .scale input { grid-column: 2; }
  .scale .head { grid-column: 1 / 4; text-align: center; margin-right: 10px; }
  .scale ui-icon { grid-column: 3; grid-row: 2 / 4; --size: 13px; }
  .actions { grid-column: 1 / 3; display: grid; grid-template-columns: 52px 52px 52px 71px; gap: 7px; }
`, () => {
  const pick = (id, label = '') => `<span class="pick off"><select id="${id}" ${label} disabled></select><span class="knob"><ui-icon name="down"></ui-icon></span></span>`;
  return `<div role="tablist"><button role="tab" aria-selected="false"><ui-icon name="note"></ui-icon>Notes</button><button role="tab" aria-selected="true"><ui-icon name="material"></ui-icon>Materials</button></div>
<div class="pane"><div class="list" role="listbox" aria-label="Materials"></div>
<div class="work">
 <group-box title-text="Basic Colors"><div class="colors">
  <label for="amb">Ambient</label>${pick('amb')}<label for="dif">Diffuse</label>${pick('dif')}<label for="spec">Specular</label>${pick('spec')}
  <label class="check"><input type="checkbox">Emissive</label>${pick('emi', 'aria-label="Emissive color"')}
  <label class="slider first" for="shin">Shininess</label><span class="first"><input id="shin" type="range" value="50"></span>
  <label class="slider" for="trans">Transparency</label><span><input id="trans" type="range" value="0"></span>
 </div></group-box>
 <div class="right">
  <group-box title-text="Material Appearance"><div class="looks"><span class="pick off"><select disabled aria-label="Appearance"><option>Standard</option></select><span class="knob"><ui-icon name="spinGray"></ui-icon></span></span><push-button label="Custom Map..." disabled></push-button></div></group-box>
  <group-box title-text="Texture" check><div class="texture"><div class="swatch">No Texture</div>
   <div class="scale"><span class="head">Scale</span><label for="sx">X</label><input id="sx" type="range" value="0"><label for="sy">Y</label><input id="sy" type="range" value="0"><ui-icon name="linked"></ui-icon><label class="head" for="rot">Rotation</label><input id="rot" type="range" value="0"></div></div></group-box>
 </div>
 <div class="actions"><push-button label="New" disabled></push-button><push-button label="Pick" disabled></push-button><push-button label="Save" disabled></push-button><push-button label="Apply To Selection" disabled></push-button></div>
</div></div>`;
});

/* ---------- save dialog ---------- */
define('save-dialog', SELECT_CSS + `
  :host { border: 1px solid #6f7a8c; outline: 1px solid #a5afbf; outline-offset: -2px; border-radius: 4px 4px 0 0; background: var(--face); padding-bottom: 34px; }
  header { display: flex; align-items: center; gap: 4px; height: 20px; padding: 0 2px 0 3px; border-radius: 3px 3px 0 0; background: linear-gradient(#fff, #e3eaf5 40%, #b3c2d8); }
  h2 { flex: 1; margin: 0; font: bold 8px/12px var(--caption); color: #1a1c20; }
  header ui-icon { --size: 14px; } header button, .icons button { display: flex; align-items: center; } header button + button { margin-left: -2px; }
  .where { display: grid; grid-template-columns: 31px 158px 1fr; align-items: center; padding: 4px 8px; }
  .folder { grid-template-columns: 17px 1fr 13px; }
  .folder > ui-icon { grid-area: 1 / 1; margin: 1px 3px; }
  .folder select { grid-area: 1 / 1 / 2 / 4; padding-left: 17px; background: none; }
  .folder .knob { grid-area: 1 / 3; }
  .icons { display: flex; gap: 4px; padding-left: 4px; }
  .files { margin: 0 5px; height: 97px; background: #fff; border: 1px solid var(--steel); }
  .form { display: grid; grid-template-columns: 51px 167px 52px; row-gap: 5px; padding: 6px 8px 13px 7px; align-items: center; }
  .form push-button { margin-left: 13px; margin-right: -13px; }
  .text { width: 100%; height: 16px; border: 1px solid var(--steel); background: #fff; padding: 0 3px; }
  hr { width: 223px; height: 1px; border: 0; margin: 0 auto; background: #5579c4; }
  group-box { width: 126px; margin: 0 0 0 87px; }
  .spec { display: grid; padding: 5px 7px 10px 5px; row-gap: 5px; }
  .line { display: flex; align-items: center; }
  .line .pick { height: 15px; width: 48px; } .line label { width: 17px; margin-left: 6px; } .line .pick.off { width: 41px; }
  .line.xy label { width: 12px; margin: 0; } .line.xy label + input + label { margin-left: 11px; }
  .line.xy .text { width: 32px; height: 17px; }
  .grip { position: absolute; right: 1px; bottom: 1px; }
`, `<header><ui-icon name="orbBlue"></ui-icon><h2>Save As</h2><button type="button" aria-label="Help"><ui-icon name="help"></ui-icon></button><button type="button" aria-label="Close"><ui-icon name="closeRed"></ui-icon></button></header>
<div class="where"><label for="in">Save in:</label><span class="pick folder"><ui-icon name="folder"></ui-icon><select id="in"><option>NotesSamples</option></select><span class="knob"><ui-icon name="spin"></ui-icon></span></span>
<span class="icons"><button type="button" aria-label="Back"><ui-icon name="back"></ui-icon></button><button type="button" aria-label="Up one level"><ui-icon name="up"></ui-icon></button><button type="button" aria-label="New folder"><ui-icon name="newFolder"></ui-icon></button><button type="button" aria-label="Views"><ui-icon name="views"></ui-icon><svg width="6" height="4" viewBox="0 0 6 4" aria-hidden="true"><path d="M1 0h5L3.500 3z" fill="#111"/></svg></button></span></div>
<div class="files" role="listbox" aria-label="Files"></div>
<div class="form"><label for="name">File name:</label><input class="text" id="name" type="text"><push-button label="Save"></push-button>
<label for="type">Save as type:</label><span class="pick"><select id="type"><option>Bitmaps (.bmp)</option></select><span class="knob"><ui-icon name="spin"></ui-icon></span></span><push-button label="Cancel"></push-button></div>
<hr>
<group-box title-text="Image Specifications"><div class="spec">
<div class="line"><span class="pick"><select aria-label="Units"><option>Pixels</option></select><span class="knob"><ui-icon name="spin"></ui-icon></span></span><label for="dpi">DPI</label><span class="pick off"><select id="dpi" disabled><option>150</option></select><span class="knob"><ui-icon name="spinGray"></ui-icon></span></span></div>
<div class="line xy"><label for="x">X</label><input class="text" id="x" type="text" value="400"><label for="y">Y</label><input class="text" id="y" type="text" value="300"></div>
</div></group-box>
<svg class="grip" width="8" height="8" viewBox="0 0 8 8" aria-hidden="true"><path d="M0 8l8-8M3 8l5-5M6 8l2-2" stroke="#b4bece"/></svg>`,
(el, root) => root.getElementById('name').focus({ preventScroll: true }));

/* ---------- status and task bars ---------- */
define('status-bar', `
  :host { display: grid; grid-template-columns: 470px 1fr; padding: 0 1px; background: #e3e6ea; line-height: 9px; }
`, `<span>Ready</span><span>Use the left mouse button to ZOOM.</span>`);
define('task-bar', `
  :host { display: flex; align-items: center; height: 22px; background: linear-gradient(#f6f9fd, #dde6f3 55%, #a8badb); font: bold 8px/12px var(--caption); color: #fff; }
  button { display: flex; align-items: center; height: 18px; border: 1px solid #2e68b4; border-radius: 4px; background: linear-gradient(#a5cbf2, #5f9bdf 50%, #84b9ee); box-shadow: inset 0 0 0 1px #9cc6f1; }
  .start { width: 66px; height: 22px; gap: 3px; padding-left: 7px; border-radius: 0 10px 10px 0; font: italic bold 11px/14px "DejaVu Sans", sans-serif; text-shadow: 1px 1px 1px #1c4787; margin-right: 8px; }
  .start ui-icon { --size: 14px; }
  .quick { width: 19px; justify-content: center; margin-right: 1px; }
  .more { width: 10px; margin: 0 5px 0 10px; justify-content: center; color: #12305c; padding-bottom: 8px; }
  .task { width: 108px; gap: 4px; padding-left: 6px; margin-right: 5px; white-space: nowrap; overflow: hidden; }
  .task.on { border-color: #c07a1c; background: linear-gradient(#fbd58c, #f2a436 50%, #fbc768); box-shadow: inset 0 0 0 1px #fde0a6; }
  .fold { margin-left: auto; margin-right: 3px; border: 0; background: none; box-shadow: none; }
  .tray { display: flex; align-items: center; gap: 1px; height: 22px; padding: 0 7px 0 4px; background: linear-gradient(#c8def6, #7eb0e6 50%, #a5caf2); }
  time { margin-left: 6px; }
`, `<button class="start" type="button"><ui-icon name="windows"></ui-icon>Start</button>
<button class="quick" type="button" aria-label="Scanner"><ui-icon name="scanner"></ui-icon></button><button class="quick" type="button" aria-label="Camera"><ui-icon name="camera"></ui-icon></button><button class="quick" type="button" aria-label="Media"><ui-icon name="mediaCard"></ui-icon></button>
<button class="more" type="button" aria-label="More">»</button>
<button class="task" type="button"><ui-icon name="clock"></ui-icon>Inbox - Microsoft ...</button><button class="task on" type="button"><ui-icon name="app"></ui-icon>QuadriSpace Note...</button>
<button class="fold" type="button" aria-label="Hide icons"><ui-icon name="collapse"></ui-icon></button>
<div class="tray"><ui-icon name="clock"></ui-icon><ui-icon name="wave"></ui-icon><ui-icon name="phone"></ui-icon><ui-icon name="globe"></ui-icon><ui-icon name="bird"></ui-icon><ui-icon name="shield"></ui-icon><ui-icon name="tools"></ui-icon><time>2:14 PM</time></div>`);

define('notes-app', `
  :host { position: relative; display: flex; flex-direction: column; height: 100vh; background: #000; }
  .window { flex: 1; min-height: 0; display: flex; flex-direction: column; margin-right: 3px; border-top: 1px solid #66666f; border-right: 1px solid #eef2f8; background: var(--face); }
  main { flex: 1; min-height: 0; display: grid; grid-template-columns: 166px 1fr; gap: 4px; padding-left: 3px; border-left: 1px solid #8c96a8; margin-bottom: 1px; }
  .work { display: grid; grid-template-rows: 1fr auto; min-height: 0; min-width: 0; }
  save-dialog { position: absolute; left: 24px; top: 172px; width: 302px; }
`, `<div class="window"><app-titlebar></app-titlebar><app-menubar></app-menubar><app-toolbars></app-toolbars>
<main><parts-panel></parts-panel><div class="work"><model-view></model-view><materials-panel></materials-panel></div></main>
<status-bar></status-bar></div><task-bar></task-bar><save-dialog></save-dialog>`);
</script>
</body>
</html>
